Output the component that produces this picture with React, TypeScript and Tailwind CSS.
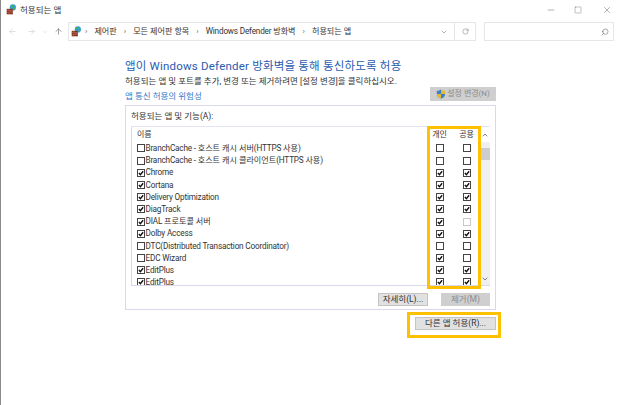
import React from 'react';
import { ArrowLeft, ArrowRight, ArrowUp, ChevronDown, ChevronUp, Minus, RotateCw, Search, Square, X } from 'lucide-react';

const FONT = 'font-["Roboto","Noto_Sans_CJK_KR",sans-serif]';

const ROWS = [
  { name: 'BranchCache - 호스트 캐시 서버(HTTPS 사용)', on: false, priv: false, pub: false },
  { name: 'BranchCache - 호스트 캐시 클라이언트(HTTPS 사용)', on: false, priv: false, pub: false },
  { name: 'Chrome', on: true, priv: true, pub: true },
  { name: 'Cortana', on: true, priv: true, pub: true },
  { name: 'Delivery Optimization', on: true, priv: true, pub: true },
  { name: 'DiagTrack', on: true, priv: true, pub: true },
  { name: 'DIAL 프로토콜 서버', on: true, priv: true, pub: false, pubDisabled: true },
  { name: 'Dolby Access', on: true, priv: true, pub: true },
  { name: 'DTC(Distributed Transaction Coordinator)', on: false, priv: false, pub: false },
  { name: 'EDC Wizard', on: false, priv: true, pub: false },
  { name: 'EditPlus', on: true, priv: true, pub: true },
  { name: 'EditPlus', on: true, priv: true, pub: true },
];

// Latin runs are narrower than Roboto's in the original font, Hangul keeps its own spacing
const Mixed: React.FC<{ text: string }> = ({ text }) => (
  <span className="whitespace-pre text-[8.2px] tracking-[-0.18px]">
    {text.split(/([가-힣][가-힣 ]*[가-힣])/).map((part, i) =>
      i % 2 === 1 ? (
        <span key={i} className="text-[8.1px] tracking-normal">
          {part}
        </span>
      ) : (
        part
      ),
    )}
  </span>
);

const Check: React.FC<{ checked: boolean; disabled?: boolean }> = ({ checked, disabled }) => (
  <span
    className={`flex h-[8px] w-[8px] shrink-0 items-center justify-center border bg-white ${
      disabled ? 'border-[#c8c8c8]' : 'border-[#444]'
    }`}
  >
    {checked && (
      <svg viewBox="0 0 7 7" className="h-[6px] w-[6px]">
        <path d="M1 3.5 L2.8 5.4 L6 1.4" fill="none" stroke="#111" strokeWidth="1.6" />
      </svg>
    )}
  </span>
);

const FirewallIcon: React.FC<{ size: number }> = ({ size }) => (
  <svg viewBox="0 0 16 16" width={size} height={size} className="shrink-0">
    <circle cx="10" cy="5" r="4.5" fill="#2f9fd8" />
    <path d="M7 2 C9 1 11 2 10 4 C8 5 7 4 7 2Z M11 5 C13 4 14 6 13 8 L11 8Z" fill="#4fae4a" />
    <path d="M1 7 L10 7 L10 15 L1 15Z" fill="#8a3324" />
    <path d="M1 9.5 H10 M1 12 H10 M4 7 V9.5 M7 9.5 V12 M4 12 V15" stroke="#c98a70" strokeWidth="0.6" />
  </svg>
);

const Shield = () => (
  <svg viewBox="0 0 12 12" width="10" height="10" className="shrink-0">
    <path d="M6 .5 C4.5 1.6 3 2 1 2 V6 C1 8.8 3.2 10.6 6 11.5Z" fill="#3f7fc4" />
    <path d="M6 .5 C7.5 1.6 9 2 11 2 V6 C11 8.8 8.8 10.6 6 11.5Z" fill="#e2b93b" />
    <path d="M1 6 H6 V11.5 C3.2 10.6 1 8.8 1 6Z" fill="#e2b93b" />
    <path d="M11 6 H6 V11.5 C8.8 10.6 11 8.8 11 6Z" fill="#3f7fc4" />
  </svg>
);

const Crumb: React.FC<{ label: string }> = ({ label }) => (
  <>
    <span className="mx-[7px] text-[8px] leading-none text-[#666]">›</span>
    <Mixed text={label} />
  </>
);

export default function App() {
  return (
    <div className={`relative h-[405px] w-[620px] overflow-hidden border-l border-[#8a8a8a] bg-white text-[8.5px] text-[#333] ${FONT}`}>
      {/* Title bar */}
      <div className="flex h-[18px] items-center pl-[5px] pt-[1px]">
        <FirewallIcon size={11} />
        <span className="ml-[3px] mt-[1px] text-[8.5px]">허용되는 앱</span>
        <div className="ml-auto flex items-center gap-[19px] pr-[8px] text-[#444]">
          <Minus size={10} strokeWidth={1} />
          <Square size={8} strokeWidth={1} className="-ml-[1px] mr-[1px]" />
          <X size={10} strokeWidth={1} />
        </div>
      </div>

      {/* Address bar */}
      <div className="mt-[4px] flex h-[19px] items-stretch">
        <div className="flex w-[67px] items-center pl-[7px] text-[#c8c8c8]">
          <ArrowLeft size={9} strokeWidth={1.5} />
          <ArrowRight size={9} strokeWidth={1.5} className="ml-[10px]" />
          <ChevronDown size={6} strokeWidth={1.5} className="ml-[6px] text-[#bbb]" />
          <ArrowUp size={9} strokeWidth={1.5} className="ml-[6px] text-[#555]" />
        </div>
        <div className="flex w-[408px] items-center border border-[#e6e6e6] pl-[2px] text-[8.5px]">
          <span className="-mr-[4px] flex">
            <FirewallIcon size={11} />
          </span>
          <Crumb label="제어판" />
          <Crumb label="모든 제어판 항목" />
          <Crumb label="Windows Defender 방화벽" />
          <Crumb label="허용되는 앱" />
          <ChevronDown size={8} strokeWidth={1.5} className="ml-auto mr-[6px] text-[#666]" />
          <div className="flex h-full w-[21px] items-center justify-center border-l border-[#e6e6e6]">
            <RotateCw size={7} strokeWidth={1.5} className="text-[#666]" />
          </div>
        </div>
        <div className="ml-[8px] flex w-[130px] items-center justify-end border border-[#e6e6e6] pr-[4px]">
          <Search size={8} strokeWidth={1.5} className="-scale-x-100 text-[#555]" />
        </div>
      </div>

      {/* Content */}
      <div className="ml-[124px] w-[371px]">
        <h1 className="mt-[17px] h-[16px] text-[11.5px] font-normal leading-[16px] tracking-[0.2px] text-[#2a5bb0]">
          앱이 Windows Defender 방화벽을 통해 통신하도록 허용
        </h1>
        <p className="mt-[1px] h-[12px] leading-[12px] text-[#333]">
          허용되는 앱 및 포트를 추가, 변경 또는 제거하려면 [설정 변경]을 클릭하십시오.
        </p>
        <div className="flex h-[14px] items-center justify-between">
          <a className="mt-[5px] text-[#2f79c9]">앱 통신 허용의 위험성</a>
          <button className="flex h-[14px] w-[66px] items-center justify-center gap-[1px] bg-[#cfcfcf] text-[8px] text-[#8c8c8c]">
            <Shield />
            설정 변경(N)
          </button>
        </div>

        {/* Allowed apps panel */}
        <div className="mt-[4px] h-[205px] border border-[#d9d9ee] pl-[5px] pr-[5px]">
          <div className="flex h-[20px] items-center text-[#333]">허용되는 앱 및 기능(A):</div>
          <div className="flex h-[160px] border border-[#d9d9ee] border-r-0 border-t-[#e4e4f2]">
            <div className="min-w-0 flex-1 overflow-hidden">
              <div className="flex h-[15.3px] items-center">
                <span className="ml-[5px] text-[8px]">이름</span>
                <span className="ml-auto w-[27px] text-center text-[8px]">개인</span>
                <span className="w-[27px] text-center text-[8px]">공용</span>
              </div>
              {ROWS.map((row, i) => (
                <div key={i} className="flex h-[12.2px] items-center pl-[5px]">
                  <Check checked={row.on} />
                  <span className="ml-[0.5px] whitespace-nowrap">
                    <Mixed text={row.name} />
                  </span>
                  <span className="ml-auto flex w-[27px] justify-center">
                    <Check checked={row.priv} />
                  </span>
                  <span className="flex w-[27px] justify-center">
                    <Check checked={row.pub} disabled={row.pubDisabled} />
                  </span>
                </div>
              ))}
            </div>
            {/* Scrollbar */}
            <div className="flex w-[10px] flex-col bg-[#f0f0f0]">
              <div className="flex h-[15px] items-center justify-center bg-white">
                <ChevronUp size={8} strokeWidth={2} className="text-[#444]" />
              </div>
              <div className="mt-[6px] h-[12px] bg-[#cdcdcd]" />
              <div className="mt-auto flex h-[13px] items-center justify-center">
                <ChevronDown size={8} strokeWidth={2} className="text-[#444]" />
              </div>
            </div>
          </div>
          <div className="mt-[7px] flex justify-end gap-[13px]">
            <button className="h-[13px] w-[50px] border border-[#c4c4c4] bg-[#e1e1e1] text-[8.5px] leading-[11px]">자세히(L)...</button>
            <button className="h-[13px] w-[49px] bg-[#cfcfcf] text-[8.5px] leading-[13px] text-[#8c8c8c]">제거(M)</button>
          </div>
        </div>

        <div className="mt-[7px] flex justify-end">
          <button className="h-[13px] w-[81px] border border-[#c4c4c4] bg-[#e1e1e1] text-[8.5px] leading-[11px]">다른 앱 허용(R)...</button>
        </div>
      </div>

      {/* Yellow highlight boxes over the screenshot */}
      <div className="absolute left-[426px] top-[126px] h-[163px] w-[54px] border-[3px] border-[#ffc000]" />
      <div className="absolute left-[406px] top-[312px] h-[26px] w-[94px] border-[3px] border-[#ffc000]" />
    </div>
  );
}
